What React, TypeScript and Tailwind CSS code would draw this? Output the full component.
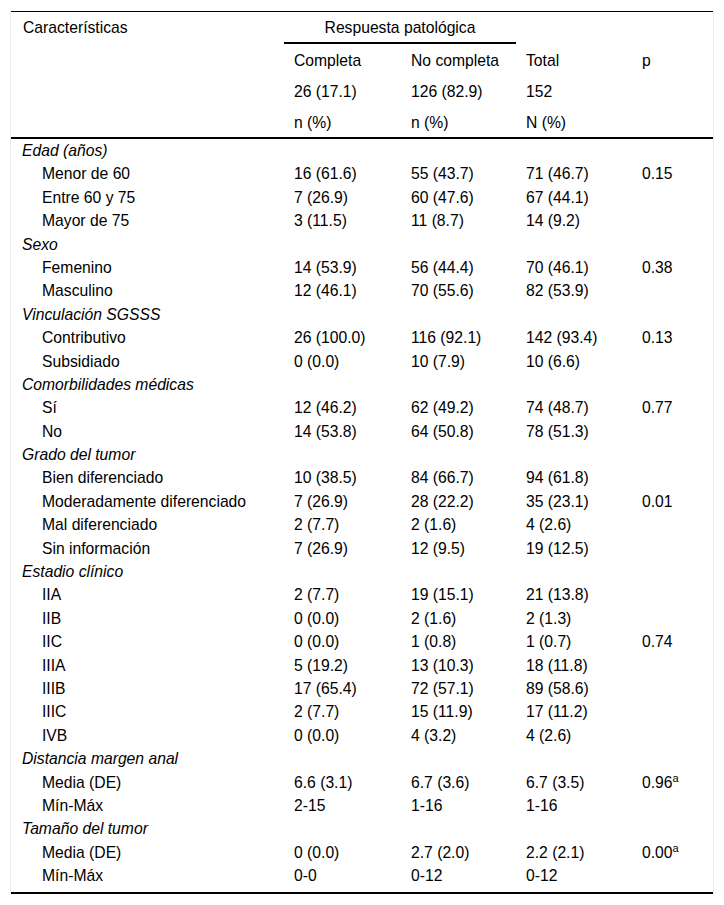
type Row = { label: string; cat?: boolean; c?: string; n?: string; t?: string; p?: string; sup?: boolean };

const rows: Row[] = [
  { label: 'Edad (años)', cat: true },
  { label: 'Menor de 60', c: '16 (61.6)', n: '55 (43.7)', t: '71 (46.7)', p: '0.15' },
  { label: 'Entre 60 y 75', c: '7 (26.9)', n: '60 (47.6)', t: '67 (44.1)' },
  { label: 'Mayor de 75', c: '3 (11.5)', n: '11 (8.7)', t: '14 (9.2)' },
  { label: 'Sexo', cat: true },
  { label: 'Femenino', c: '14 (53.9)', n: '56 (44.4)', t: '70 (46.1)', p: '0.38' },
  { label: 'Masculino', c: '12 (46.1)', n: '70 (55.6)', t: '82 (53.9)' },
  { label: 'Vinculación SGSSS', cat: true },
  { label: 'Contributivo', c: '26 (100.0)', n: '116 (92.1)', t: '142 (93.4)', p: '0.13' },
  { label: 'Subsidiado', c: '0 (0.0)', n: '10 (7.9)', t: '10 (6.6)' },
  { label: 'Comorbilidades médicas', cat: true },
  { label: 'Sí', c: '12 (46.2)', n: '62 (49.2)', t: '74 (48.7)', p: '0.77' },
  { label: 'No', c: '14 (53.8)', n: '64 (50.8)', t: '78 (51.3)' },
  { label: 'Grado del tumor', cat: true },
  { label: 'Bien diferenciado', c: '10 (38.5)', n: '84 (66.7)', t: '94 (61.8)' },
  { label: 'Moderadamente diferenciado', c: '7 (26.9)', n: '28 (22.2)', t: '35 (23.1)', p: '0.01' },
  { label: 'Mal diferenciado', c: '2 (7.7)', n: '2 (1.6)', t: '4 (2.6)' },
  { label: 'Sin información', c: '7 (26.9)', n: '12 (9.5)', t: '19 (12.5)' },
  { label: 'Estadio clínico', cat: true },
  { label: 'IIA', c: '2 (7.7)', n: '19 (15.1)', t: '21 (13.8)' },
  { label: 'IIB', c: '0 (0.0)', n: '2 (1.6)', t: '2 (1.3)' },
  { label: 'IIC', c: '0 (0.0)', n: '1 (0.8)', t: '1 (0.7)', p: '0.74' },
  { label: 'IIIA', c: '5 (19.2)', n: '13 (10.3)', t: '18 (11.8)' },
  { label: 'IIIB', c: '17 (65.4)', n: '72 (57.1)', t: '89 (58.6)' },
  { label: 'IIIC', c: '2 (7.7)', n: '15 (11.9)', t: '17 (11.2)' },
  { label: 'IVB', c: '0 (0.0)', n: '4 (3.2)', t: '4 (2.6)' },
  { label: 'Distancia margen anal', cat: true },
  { label: 'Media (DE)', c: '6.6 (3.1)', n: '6.7 (3.6)', t: '6.7 (3.5)', p: '0.96', sup: true },
  { label: 'Mín-Máx', c: '2-15', n: '1-16', t: '1-16' },
  { label: 'Tamaño del tumor', cat: true },
  { label: 'Media (DE)', c: '0 (0.0)', n: '2.7 (2.0)', t: '2.2 (2.1)', p: '0.00', sup: true },
  { label: 'Mín-Máx', c: '0-0', n: '0-12', t: '0-12' },
];

const cols = 'grid grid-cols-[273px_117px_115px_116px_1fr]';

export default function App() {
  return (
    <div className="min-h-screen bg-white pt-[11px] font-['Liberation_Sans',Arial,sans-serif] text-[15.7px] text-black">
      <div className="ml-[10px] w-[704px] border-x border-[#ececec]">
        <div className="border-t border-black">
          <div className={`${cols} h-[32px]`}>
            <div className="pl-[12px] pt-[6px] leading-5">Características</div>
            <div className="col-span-2 border-b-2 border-black pt-[6px] text-center leading-5">
              Respuesta patológica
            </div>
          </div>
          <HeaderRow cells={['Completa', 'No completa', 'Total', 'p']} />
          <HeaderRow cells={['26 (17.1)', '126 (82.9)', '152', '']} />
          <HeaderRow cells={['n (%)', 'n (%)', 'N (%)', '']} />
        </div>
        <div className="border-t-2 border-black pb-[4px] border-b-2">
          {rows.map((r, i) => (
            <div key={i} className={`${cols} h-[23.4px] leading-[23.4px]`}>
              <div className={r.cat ? 'pl-[11px] italic' : 'pl-[31px]'}>{r.label}</div>
              <div className="pl-[10px]">{r.c}</div>
              <div className="pl-[10px]">{r.n}</div>
              <div className="pl-[10px]">{r.t}</div>
              <div className="pl-[10px]">
                {r.p}
                {r.sup && <sup className="text-[11px]">a</sup>}
              </div>
            </div>
          ))}
        </div>
      </div>
    </div>
  );
}

function HeaderRow({ cells }: { cells: string[] }) {
  return (
    <div className={`${cols} h-[31px]`}>
      <div />
      {cells.map((c, i) => (
        <div key={i} className="pl-[10px] pt-[7px] leading-5">
          {c}
        </div>
      ))}
    </div>
  );
}
